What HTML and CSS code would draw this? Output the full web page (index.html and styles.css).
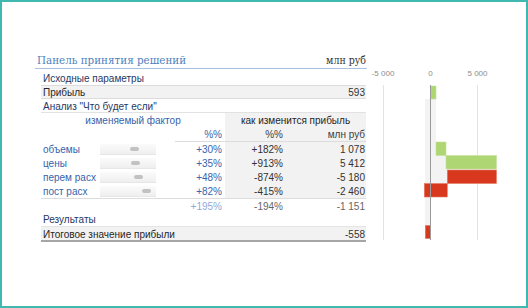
FILE: index.html
```html
<!DOCTYPE html>
<html lang="ru">
<head>
<meta charset="utf-8">
<title>Панель принятия решений</title>
<link rel="stylesheet" href="styles.css">
</head>
<body>
<div class="frame">
  <div class="sheet">
    <div class="panel">
      <div class="title-row">
        <span class="title">Панель принятия решений</span>
        <span class="unit">млн руб</span>
      </div>
      <div class="grid">
        <div class="c span5 section first">Исходные параметры</div>

        <div class="c span4 shaded lined dark">Прибыль</div>
        <div class="c shaded lined num">593</div>

        <div class="c span5 section under">Анализ "Что будет если"</div>

        <div class="c span3 center blue">изменяемый фактор</div>
        <div class="c span2 center gray-block dark">как изменится прибыль</div>

        <div class="c"></div>
        <div class="c"></div>
        <div class="c num blue pct-head">%%</div>
        <div class="c num gray-block mid rule col4">%%</div>
        <div class="c num gray-block mid rule">млн руб</div>

        <div class="c blue">объемы</div>
        <div class="c slider"><div class="track"><span class="thumb" style="margin-left:30px"></span></div></div>
        <div class="c num blue">+30%</div>
        <div class="c num gray-block col4">+182%</div>
        <div class="c num gray-block">1 078</div>

        <div class="c blue">цены</div>
        <div class="c slider"><div class="track"><span class="thumb" style="margin-left:31px"></span></div></div>
        <div class="c num blue">+35%</div>
        <div class="c num gray-block col4">+913%</div>
        <div class="c num gray-block">5 412</div>

        <div class="c blue">перем расх</div>
        <div class="c slider"><div class="track"><span class="thumb" style="margin-left:34px"></span></div></div>
        <div class="c num blue">+48%</div>
        <div class="c num gray-block col4">-874%</div>
        <div class="c num gray-block">-5 180</div>

        <div class="c blue">пост расх</div>
        <div class="c slider"><div class="track"><span class="thumb" style="margin-left:42px"></span></div></div>
        <div class="c num blue">+82%</div>
        <div class="c num gray-block col4">-415%</div>
        <div class="c num gray-block">-2 460</div>

        <div class="c top-rule"></div>
        <div class="c top-rule"></div>
        <div class="c num top-rule light-blue">+195%</div>
        <div class="c num top-rule muted col4">-194%</div>
        <div class="c num top-rule muted">-1 151</div>

        <div class="c span5 section">Результаты</div>

        <div class="c span4 shaded final dark">Итоговое значение прибыли</div>
        <div class="c shaded final num">-558</div>
      </div>
    </div>

    <svg class="chart" width="140" height="190" viewBox="0 0 140 190">
      <text class="axis-label" x="16" y="24" text-anchor="middle">-5 000</text>
      <text class="axis-label" x="63.5" y="24" text-anchor="middle">0</text>
      <text class="axis-label" x="110.5" y="24" text-anchor="middle">5 000</text>

      <rect class="base" x="58" y="47" width="5.5" height="127"/>
      <rect class="base" x="63.5" y="47" width="5.5" height="43"/>
      <rect class="base" x="63.5" y="90" width="15.5" height="28"/>
      <rect class="base" x="63.5" y="118" width="16.8" height="13.5"/>

      <line class="grid-line" x1="16.5" y1="33" x2="16.5" y2="188"/>
      <line class="grid-line" x1="110.5" y1="33" x2="110.5" y2="188"/>

      <rect class="pos" x="63.5" y="34" width="5.5" height="13"/>
      <rect class="pos" x="69" y="90" width="10" height="13.5"/>
      <rect class="pos" x="79" y="103.5" width="50.5" height="13.5"/>
      <rect class="neg" x="80.3" y="118" width="49.2" height="13.5"/>
      <rect class="neg" x="57.3" y="131.5" width="23" height="13.5"/>
      <rect class="neg" x="58.3" y="173.5" width="5.2" height="13"/>

      <line class="axis" x1="63.5" y1="33" x2="63.5" y2="188"/>
    </svg>
  </div>
</div>
</body>
</html>
```

FILE: styles.css
```css
html, body {
  margin: 0;
  padding: 0;
  background: #ffffff;
}

.frame {
  box-sizing: border-box;
  width: 528px;
  height: 308px;
  border: 2px solid #3fb9b0;
  padding: 50px 0 0 33px;
  font-family: "Liberation Sans", Arial, sans-serif;
  font-size: 10px;
  color: #333333;
}

.sheet {
  display: flex;
  align-items: flex-start;
}

.panel {
  width: 332px;
}

.title-row {
  display: flex;
  justify-content: space-between;
  align-items: flex-end;
  height: 16px;
  border-bottom: 1px solid #a9c0de;
  font-family: "DejaVu Serif Condensed", "DejaVu Serif", "Liberation Serif", serif;
}

.title {
  font-size: 11.5px;
  line-height: 16px;
  color: #4f81bd;
  padding-left: 2px;
}

.unit {
  font-size: 10.5px;
  line-height: 15px;
  color: #333333;
  padding-right: 1px;
}

.grid {
  display: grid;
  grid-template-columns: 59px 56px 69px 60px 81px;
  grid-template-rows: 16px 14px 14px 14px 15px 14px 14px 14px 14px 14px 14px 16px;
  margin-left: 6px;
  width: 325px;
}

.c {
  box-sizing: border-box;
  padding: 1px 2px 0 2px;
  line-height: 14px;
  white-space: nowrap;
  overflow: hidden;
}

.span2 { grid-column: span 2; }
.span3 { grid-column: span 3; }
.span4 { grid-column: span 4; }
.span5 { grid-column: span 5; }

.section {
  color: #1f3864;
}

.section.first {
  padding-top: 3px;
}

.under {
  border-bottom: 1px solid #e2e2e2;
  line-height: 13px;
}

.shaded {
  background: #f2f2f2;
}

.lined {
  border-top: 1px solid #dcdcdc;
  border-bottom: 1px solid #dcdcdc;
  line-height: 12px;
}

.final {
  border-top: 1px solid #e4e4e4;
  border-bottom: 2px solid #a6a6a6;
  line-height: 13px;
}

.dark { color: #262626; }
.blue { color: #3563ad; }
.light-blue { color: #8eaadc; }
.muted { color: #666666; }
.mid { color: #404040; }

.center { text-align: center; }

.num {
  text-align: right;
  padding-right: 1px;
}

.grid .blue.num,
.grid .light-blue.num {
  padding-right: 3px;
}

.gray-block {
  background: #f2f2f2;
}

.col4 {
  padding-right: 2px;
}

.pct-head {
  margin-left: 19px;
  border-bottom: 1px solid #dcdcdc;
  line-height: 14px;
  padding-top: 1px;
}

.rule {
  border-bottom: 1px solid #dcdcdc;
}

.top-rule {
  border-top: 1px solid #dcdcdc;
  line-height: 13px;
}

.slider {
  padding: 2px 0 1px 0;
}

.track {
  box-sizing: border-box;
  height: 11px;
  background: linear-gradient(#fbfbfb, #efefef);
  border-bottom: 1px solid #e6e6e6;
  display: flex;
  align-items: center;
}

.thumb {
  display: block;
  width: 9px;
  height: 4px;
  border-radius: 2px;
  background: #c2c2c2;
}

.chart {
  display: block;
  flex: none;
}

.axis-label {
  font-family: "Liberation Sans", Arial, sans-serif;
  font-size: 8px;
  fill: #8c8c8c;
}

.grid-line {
  stroke: #e3e3e3;
  stroke-width: 1;
}

.axis {
  stroke: #9a9a9a;
  stroke-width: 1;
}

.base {
  fill: #f3f3f3;
}

.pos {
  fill: #aed673;
  stroke: #c4e29c;
  stroke-width: 0.6;
}

.neg {
  fill: #d8381d;
  stroke: #e57b66;
  stroke-width: 0.6;
}
```
